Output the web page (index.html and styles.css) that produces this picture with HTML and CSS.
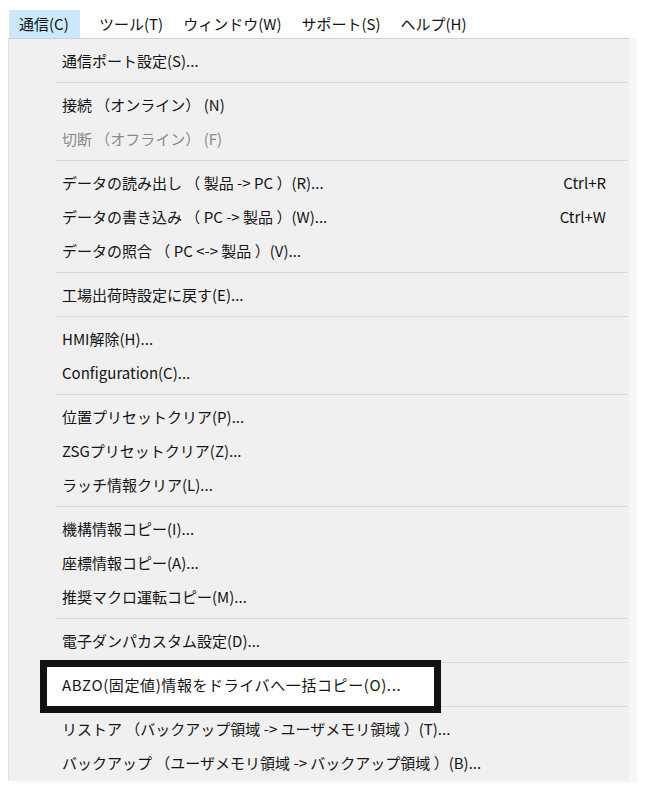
FILE: index.html
```html
<!DOCTYPE html>
<html lang="ja">
<head>
<meta charset="utf-8">
<link rel="stylesheet" href="styles.css">
</head>
<body>
<div class="menubar">
  <span class="mb-item active">通信(C)</span>
  <span class="mb-item">ツール(T)</span>
  <span class="mb-item">ウィンドウ(W)</span>
  <span class="mb-item">サポート(S)</span>
  <span class="mb-item">ヘルプ(H)</span>
</div>
<div class="menu">
  <div class="item"><span class="label">通信ポート設定(S)...</span></div>
  <div class="sep"></div>
  <div class="item"><span class="label">接続 （オンライン） (N)</span></div>
  <div class="item disabled"><span class="label">切断 （オフライン） (F)</span></div>
  <div class="sep"></div>
  <div class="item"><span class="label">データの読み出し （ 製品 -&gt; PC ）(R)...</span><span class="key">Ctrl+R</span></div>
  <div class="item"><span class="label">データの書き込み （ PC -&gt; 製品 ）(W)...</span><span class="key">Ctrl+W</span></div>
  <div class="item"><span class="label">データの照合 （ PC &lt;-&gt; 製品 ）(V)...</span></div>
  <div class="sep"></div>
  <div class="item"><span class="label">工場出荷時設定に戻す(E)...</span></div>
  <div class="sep"></div>
  <div class="item"><span class="label">HMI解除(H)...</span></div>
  <div class="item"><span class="label">Configuration(C)...</span></div>
  <div class="sep"></div>
  <div class="item"><span class="label">位置プリセットクリア(P)...</span></div>
  <div class="item"><span class="label">ZSGプリセットクリア(Z)...</span></div>
  <div class="item"><span class="label">ラッチ情報クリア(L)...</span></div>
  <div class="sep"></div>
  <div class="item"><span class="label">機構情報コピー(I)...</span></div>
  <div class="item"><span class="label">座標情報コピー(A)...</span></div>
  <div class="item"><span class="label">推奨マクロ運転コピー(M)...</span></div>
  <div class="sep"></div>
  <div class="item"><span class="label">電子ダンパカスタム設定(D)...</span></div>
  <div class="sep"></div>
  <div class="item marked"><span class="label wide">ABZO(固定値)情報をドライバへ一括コピー(O)...</span></div>
  <div class="sep"></div>
  <div class="item"><span class="label">リストア （バックアップ領域 -&gt; ユーザメモリ領域 ）(T)...</span></div>
  <div class="item"><span class="label">バックアップ （ユーザメモリ領域 -&gt; バックアップ領域 ）(B)...</span></div>
</div>
</body>
</html>
```

FILE: styles.css
```css
html, body {
  margin: 0;
  padding: 0;
  background: #ffffff;
}
body {
  font-family: "Noto Sans CJK JP", "Noto Sans", sans-serif;
  color: #141414;
  width: 650px;
  height: 790px;
  overflow: hidden;
}
.menubar {
  display: flex;
  padding: 10px 0 0 9px;
  height: 28px;
  font-size: 15px;
  line-height: 28px;
}
.mb-item {
  padding: 0 10px;
}
.mb-item.active {
  background: #cce8ff;
  width: 61px;
  padding: 0 0 0 10px;
  margin-right: 9px;
}
.menu {
  margin-left: 8px;
  width: 620px;
  background: #f0f0f0;
  border-top: 1px solid #cfcfcf;
  border-left: 1px solid #e3e3e3;
  padding: 4px 0 2px 0;
  box-shadow: 8px 0 0 #f7f7f7, 8px 2px 0 #f7f7f7;
}
.item {
  position: relative;
  display: flex;
  justify-content: space-between;
  align-items: center;
  height: 34px;
  padding: 0 23px 0 53px;
  font-size: 15px;
  white-space: nowrap;
}
.item .label,
.item .key {
  position: relative;
  z-index: 1;
}
.item .label.wide {
  letter-spacing: 0.6px;
}
.item.disabled {
  color: #8a8a8a;
}
.sep {
  height: 10px;
  margin: 0 1px 0 47px;
  display: flex;
  align-items: center;
}
.sep::before {
  content: "";
  flex: 1;
  height: 1px;
  background: #d8d8d8;
}
.item.marked::before {
  content: "";
  position: absolute;
  left: 31px;
  top: -7px;
  width: 387px;
  height: 39px;
  border: 7px solid #111111;
  background: #ffffff;
  z-index: 0;
}
```
